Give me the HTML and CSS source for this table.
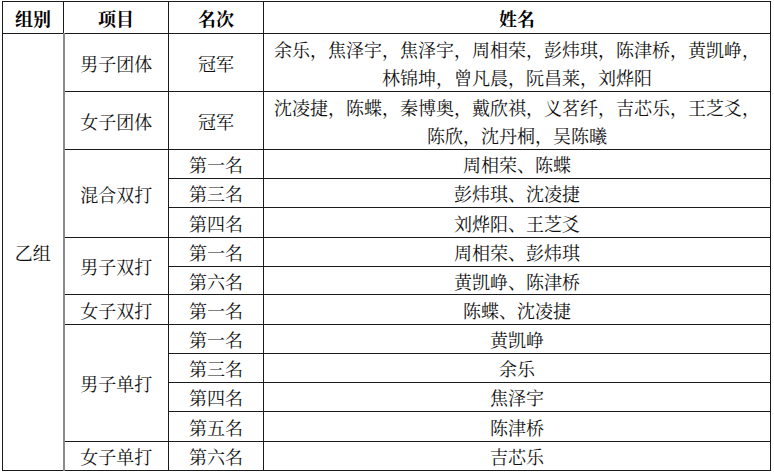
FILE: index.html
```html
<!DOCTYPE html>
<html lang="zh">
<head>
<meta charset="utf-8">
<link rel="stylesheet" href="styles.css">
</head>
<body>
<table class="results">
  <colgroup>
    <col class="c-group">
    <col class="c-event">
    <col class="c-rank">
    <col class="c-names">
  </colgroup>
  <thead>
    <tr class="h-head">
      <th>组别</th><th>项目</th><th>名次</th><th>姓名</th>
    </tr>
  </thead>
  <tbody>
    <tr class="h-double">
      <td class="group" rowspan="13">乙组</td>
      <td class="event">男子团体</td>
      <td>冠军</td>
      <td class="names">余乐，焦泽宇，焦泽宇，周相荣，彭炜琪，陈津桥，黄凯峥，<br>林锦坤，曾凡晨，阮昌莱，刘烨阳</td>
    </tr>
    <tr class="h-double">
      <td class="event">女子团体</td>
      <td>冠军</td>
      <td class="names">沈凌捷，陈蝶，秦博奥，戴欣祺，义茗纤，吉芯乐，王芝爻，<br>陈欣，沈丹桐，吴陈曦</td>
    </tr>
    <tr class="h29">
      <td class="event" rowspan="3">混合双打</td>
      <td>第一名</td><td>周相荣、陈蝶</td>
    </tr>
    <tr class="h29"><td>第三名</td><td>彭炜琪、沈凌捷</td></tr>
    <tr class="h30"><td>第四名</td><td>刘烨阳、王芝爻</td></tr>
    <tr class="h29">
      <td class="event" rowspan="2">男子双打</td>
      <td>第一名</td><td>周相荣、彭炜琪</td>
    </tr>
    <tr class="h28"><td>第六名</td><td>黄凯峥、陈津桥</td></tr>
    <tr class="h30">
      <td class="event">女子双打</td>
      <td>第一名</td><td>陈蝶、沈凌捷</td>
    </tr>
    <tr class="h29">
      <td class="event" rowspan="4">男子单打</td>
      <td>第一名</td><td>黄凯峥</td>
    </tr>
    <tr class="h29"><td>第三名</td><td>余乐</td></tr>
    <tr class="h29"><td>第四名</td><td>焦泽宇</td></tr>
    <tr class="h30"><td>第五名</td><td>陈津桥</td></tr>
    <tr class="h29">
      <td class="event">女子单打</td>
      <td>第六名</td><td>吉芯乐</td>
    </tr>
  </tbody>
</table>
</body>
</html>
```

FILE: styles.css
```css
html, body {
  margin: 0;
  padding: 0;
  background: #ffffff;
}

body {
  padding: 1px 0 0 2px;
  font-family: "Noto Serif CJK SC", "Noto Sans CJK SC", serif;
  color: #111111;
}

.results {
  border-collapse: collapse;
  table-layout: fixed;
  width: 768px;
  font-size: 18px;
}

.c-group { width: 61px; }
.c-event { width: 105px; }
.c-rank  { width: 95px; }
.c-names { width: 507px; }

.results th,
.results td {
  border: 1px solid #1a1a1a;
  padding: 0;
  text-align: center;
  vertical-align: middle;
  line-height: 22px;
  white-space: nowrap;
  overflow: hidden;
}

.results th {
  font-weight: bold;
  color: #000000;
}

.results td.group {
  border-right: 2px solid #8a8a8a;
}

.results td.names {
  line-height: 28px;
}

.h-head   { height: 32px; }
.h-double { height: 58px; }
.h28 { height: 28px; }
.h29 { height: 29px; }
.h30 { height: 30px; }
```
